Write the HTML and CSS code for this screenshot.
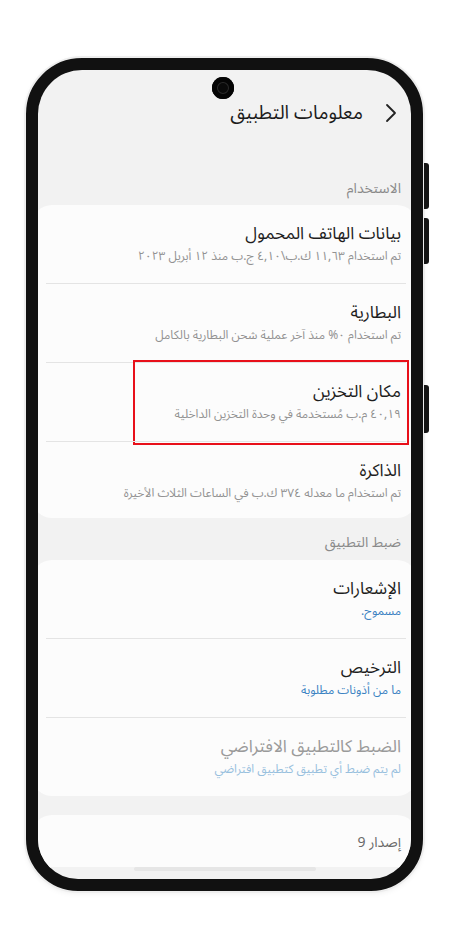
FILE: index.html
```html
<!DOCTYPE html>
<html lang="ar">
<head>
<meta charset="utf-8">
<title>معلومات التطبيق</title>
<link rel="stylesheet" href="styles.css">
</head>
<body>
<div class="phone">
  <span class="side-btn btn-1"></span>
  <span class="side-btn btn-2"></span>
  <span class="side-btn btn-3"></span>
  <div class="screen" dir="rtl">
    <div class="camera"></div>
    <header class="topbar">
      <svg class="back" width="12" height="20" viewBox="0 0 12 20"><polyline points="2,2 10,10 2,18" fill="none" stroke="#222" stroke-width="1.8" stroke-linecap="round" stroke-linejoin="round"/></svg>
      <h1 class="title">معلومات التطبيق</h1>
    </header>

    <div class="label label-first">الاستخدام</div>
    <div class="card">
      <div class="row">
        <div class="row-title">بيانات الهاتف المحمول</div>
        <div class="row-sub">تم استخدام ١١,٦٣ ك.ب\٤,١٠ ج.ب منذ ١٢ أبريل ٢٠٢٣</div>
      </div>
      <div class="row">
        <div class="row-title">البطارية</div>
        <div class="row-sub">تم استخدام ٠% منذ آخر عملية شحن البطارية بالكامل</div>
      </div>
      <div class="row row-marked">
        <div class="row-title">مكان التخزين</div>
        <div class="row-sub">٤٠,١٩ م.ب مُستخدمة في وحدة التخزين الداخلية</div>
      </div>
      <div class="row row-last">
        <div class="row-title">الذاكرة</div>
        <div class="row-sub">تم استخدام ما معدله ٣٧٤ ك.ب في الساعات الثلاث الأخيرة</div>
      </div>
    </div>

    <div class="label">ضبط التطبيق</div>
    <div class="card">
      <div class="row">
        <div class="row-title">الإشعارات</div>
        <div class="row-sub sub-blue">مسموح.</div>
      </div>
      <div class="row">
        <div class="row-title">الترخيص</div>
        <div class="row-sub sub-blue">ما من أذونات مطلوبة</div>
      </div>
      <div class="row">
        <div class="row-title title-disabled">الضبط كالتطبيق الافتراضي</div>
        <div class="row-sub sub-disabled">لم يتم ضبط أي تطبيق كتطبيق افتراضي</div>
      </div>
    </div>

    <div class="card card-version">
      <div class="version">إصدار 9</div>
    </div>
    <div class="nav-hint"><span class="pill"></span></div>
  </div>
</div>
</body>
</html>
```

FILE: styles.css
```css
html, body {
  margin: 0;
  padding: 0;
  background: #ffffff;
}

body {
  width: 450px;
  height: 928px;
  overflow: hidden;
  font-family: "Noto Sans Arabic", "DejaVu Sans", "Noto Sans", sans-serif;
}

.phone {
  position: relative;
  box-sizing: border-box;
  width: 397px;
  height: 833px;
  margin: 58px 0 0 26px;
  border: 12px solid #111111;
  border-radius: 56px 56px 52px 52px;
  box-shadow: 0 0 0 2px #ededed, 0 2px 6px rgba(0, 0, 0, 0.08);
  background: #111111;
}

.side-btn {
  position: absolute;
  right: -18px;
  width: 5px;
  background: #151515;
  border-radius: 0 3px 3px 0;
}
.btn-1 { top: 93px; height: 46px; }
.btn-2 { top: 148px; height: 46px; }
.btn-3 { top: 315px; height: 48px; }

.screen {
  position: relative;
  width: 373px;
  height: 809px;
  border-radius: 44px 44px 40px 40px;
  overflow: hidden;
  background: #f2f2f2;
}

.camera {
  position: absolute;
  top: 7px;
  left: 174px;
  width: 22px;
  height: 22px;
  border-radius: 50%;
  background: #0a0a0a;
  box-shadow: inset 0 0 0 5px #050505, inset 0 0 0 6px #2a2a2a;
}

.topbar {
  display: flex;
  align-items: center;
  gap: 22px;
  height: 30px;
  padding: 28px 14px 0 0;
  margin-bottom: 28px;
}

.back {
  display: block;
  flex: none;
}

.title {
  margin: 0;
  font-size: 19px;
  font-weight: 400;
  line-height: 30px;
  color: #1c1c1c;
}

.label {
  padding: 16px 10px 8px 0;
  font-size: 14px;
  line-height: 18px;
  color: #8a8a8a;
}
.label-first {
  padding-top: 24px;
  padding-bottom: 7px;
}

.card {
  margin: 0 -6px;
  background: #fcfcfc;
  border-radius: 20px;
}

.row {
  position: relative;
  margin: 0 11px 0 14px;
  padding: 17px 5px 16px 0;
}
.row + .row {
  border-top: 1px solid #e4e4e4;
}
.row-last {
  padding-bottom: 14px;
}

.row-title {
  font-size: 17px;
  line-height: 25px;
  color: #1e1e1e;
}

.row-sub {
  font-size: 12px;
  line-height: 20px;
  color: #929292;
  white-space: nowrap;
}

.sub-blue {
  color: #3a82c2;
}

.title-disabled {
  color: #9a9a9a;
}

.sub-disabled {
  color: #98c0de;
}

.row-marked::after {
  content: "";
  position: absolute;
  top: -3px;
  bottom: -4px;
  left: 87px;
  right: -3px;
  border: 2px solid #e8101a;
}

.card-version {
  margin-top: 19px;
  height: 52px;
  border-radius: 20px 20px 0 0;
}

.version {
  padding: 18px 16px 0 0;
  font-size: 14px;
  line-height: 20px;
  color: #6a6a6a;
}

.nav-hint {
  display: flex;
  justify-content: center;
}

.pill {
  display: block;
  width: 182px;
  height: 4px;
  border-radius: 2px;
  background: #e6e6e6;
}
```
